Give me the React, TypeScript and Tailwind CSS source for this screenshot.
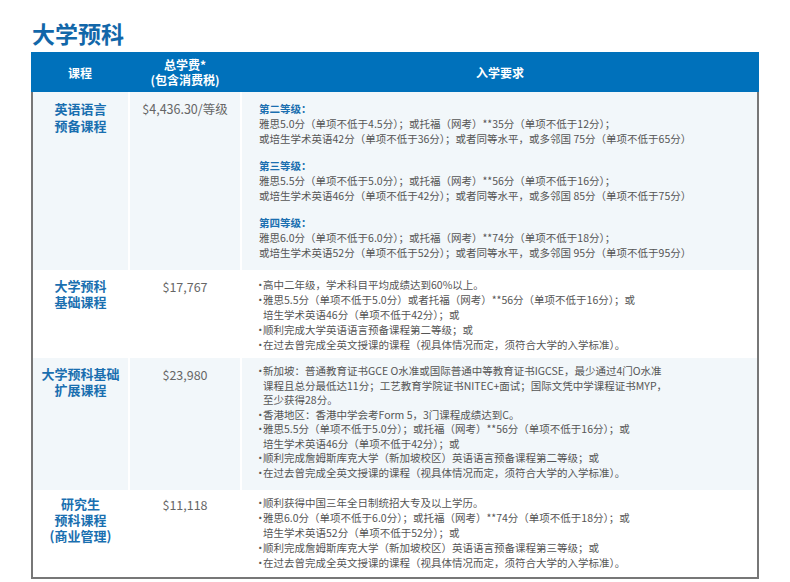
import React from "react";

const F = { fontFamily: '"Noto Sans CJK SC", "Liberation Sans", sans-serif' };

const Li = ({ children }: { children: React.ReactNode }) => (
  <div className="flex"><span className="w-[8px] shrink-0">·</span><span>{children}</span></div>
);

export default function App() {
  return (
    <div className="w-[790px] h-[582px] bg-white relative overflow-hidden" style={F}>
      <div className="pt-[18px] pl-[32px] text-[23px] font-bold text-[#1267a9] leading-[30px]">大学预科</div>
      <div className="ml-[31px] mt-[4px] w-[728px]">
        <div className="flex h-[40px] bg-[#0071bb] text-white font-bold text-[12px] leading-[15px] text-center items-center">
          <div className="w-[98px]">课程</div>
          <div className="w-[112px]">总学费*<br />(包含消费税)</div>
          <div className="flex-1">入学要求</div>
        </div>
        <div className="border-l-[2px] border-r-[2px] border-b-[2px] border-[#777] text-[10.5px] text-[#555] leading-[15px]">
          <div className="flex gap-[2px] bg-white h-[178px]">
            <div className="w-[95px] bg-[#f2f7fa] text-center text-[13px] font-bold text-[#1a6fb0] leading-[17px] pt-[8px]">英语语言<br />预备课程</div>
            <div className="w-[110px] bg-[#f2f7fa] text-center text-[12.5px] text-[#666] pt-[8px] leading-[17px]">$4,436.30/等级</div>
            <div className="flex-1 bg-[#f2f7fa] pl-[17px] pt-[9px]">
              {[["第二等级：","雅思5.0分（单项不低于4.5分）；或托福（网考）**35分（单项不低于12分）；","或培生学术英语42分（单项不低于36分）；或者同等水平，或多邻国 75分（单项不低于65分）"],
                ["第三等级：","雅思5.5分（单项不低于5.0分）；或托福（网考）**56分（单项不低于16分）；","或培生学术英语46分（单项不低于42分）；或者同等水平，或多邻国 85分（单项不低于75分）"],
                ["第四等级：","雅思6.0分（单项不低于6.0分）；或托福（网考）**74分（单项不低于18分）；","或培生学术英语52分（单项不低于52分）；或者同等水平，或多邻国 95分（单项不低于95分）"]].map((g, i) => (
                <div key={i} className="mb-[12px]">
                  <div className="font-bold text-[#1a6fb0]">{g[0]}</div>
                  <div>{g[1]}</div>
                  <div>{g[2]}</div>
                </div>
              ))}
            </div>
          </div>
          <div className="flex gap-[2px] bg-white h-[88px]">
            <div className="w-[95px] text-center text-[13px] font-bold text-[#1a6fb0] leading-[16px] pt-[8px]">大学预科<br />基础课程</div>
            <div className="w-[110px] text-center text-[12.5px] text-[#666] pt-[8px] leading-[17px]">$17,767</div>
            <div className="flex-1 pl-[13px] pt-[7px]">
              <Li>高中二年级，学术科目平均成绩达到60%以上。</Li>
              <Li>雅思5.5分（单项不低于5.0分）或者托福（网考）**56分（单项不低于16分）；或<br />培生学术英语46分（单项不低于42分）；或</Li>
              <Li>顺利完成大学英语语言预备课程第二等级；或</Li>
              <Li>在过去曾完成全英文授课的课程（视具体情况而定，须符合大学的入学标准）。</Li>
            </div>
          </div>
          <div className="flex gap-[2px] bg-white h-[132px]">
            <div className="w-[95px] bg-[#f2f7fa] text-center text-[13px] font-bold text-[#1a6fb0] leading-[16px] pt-[8px]">大学预科基础<br />扩展课程</div>
            <div className="w-[110px] bg-[#f2f7fa] text-center text-[12.5px] text-[#666] pt-[8px] leading-[17px]">$23,980</div>
            <div className="flex-1 bg-[#f2f7fa] pl-[13px] pt-[6px] leading-[14.5px]">
              <Li>新加坡：普通教育证书GCE O水准或国际普通中等教育证书IGCSE，最少通过4门O水准<br />课程且总分最低达11分；工艺教育学院证书NITEC+面试；国际文凭中学课程证书MYP，<br />至少获得28分。</Li>
              <Li>香港地区：香港中学会考Form 5，3门课程成绩达到C。</Li>
              <Li>雅思5.5分（单项不低于5.0分）；或托福（网考）**56分（单项不低于16分）；或<br />培生学术英语46分（单项不低于42分）；或</Li>
              <Li>顺利完成詹姆斯库克大学（新加坡校区）英语语言预备课程第二等级；或</Li>
              <Li>在过去曾完成全英文授课的课程（视具体情况而定，须符合大学的入学标准）。</Li>
            </div>
          </div>
          <div className="flex gap-[2px] bg-white h-[87px]">
            <div className="w-[95px] text-center text-[13px] font-bold text-[#1a6fb0] leading-[16px] pt-[6px]">研究生<br />预科课程<br />(商业管理)</div>
            <div className="w-[110px] text-center text-[12.5px] text-[#666] pt-[6px] leading-[17px]">$11,118</div>
            <div className="flex-1 pl-[13px] pt-[5px]">
              <Li>顺利获得中国三年全日制统招大专及以上学历。</Li>
              <Li>雅思6.0分（单项不低于6.0分）；或托福（网考）**74分（单项不低于18分）；或<br />培生学术英语52分（单项不低于52分）；或</Li>
              <Li>顺利完成詹姆斯库克大学（新加坡校区）英语语言预备课程第三等级；或</Li>
              <Li>在过去曾完成全英文授课的课程（视具体情况而定，须符合大学的入学标准）。</Li>
            </div>
          </div>
        </div>
      </div>
    </div>
  );
}
